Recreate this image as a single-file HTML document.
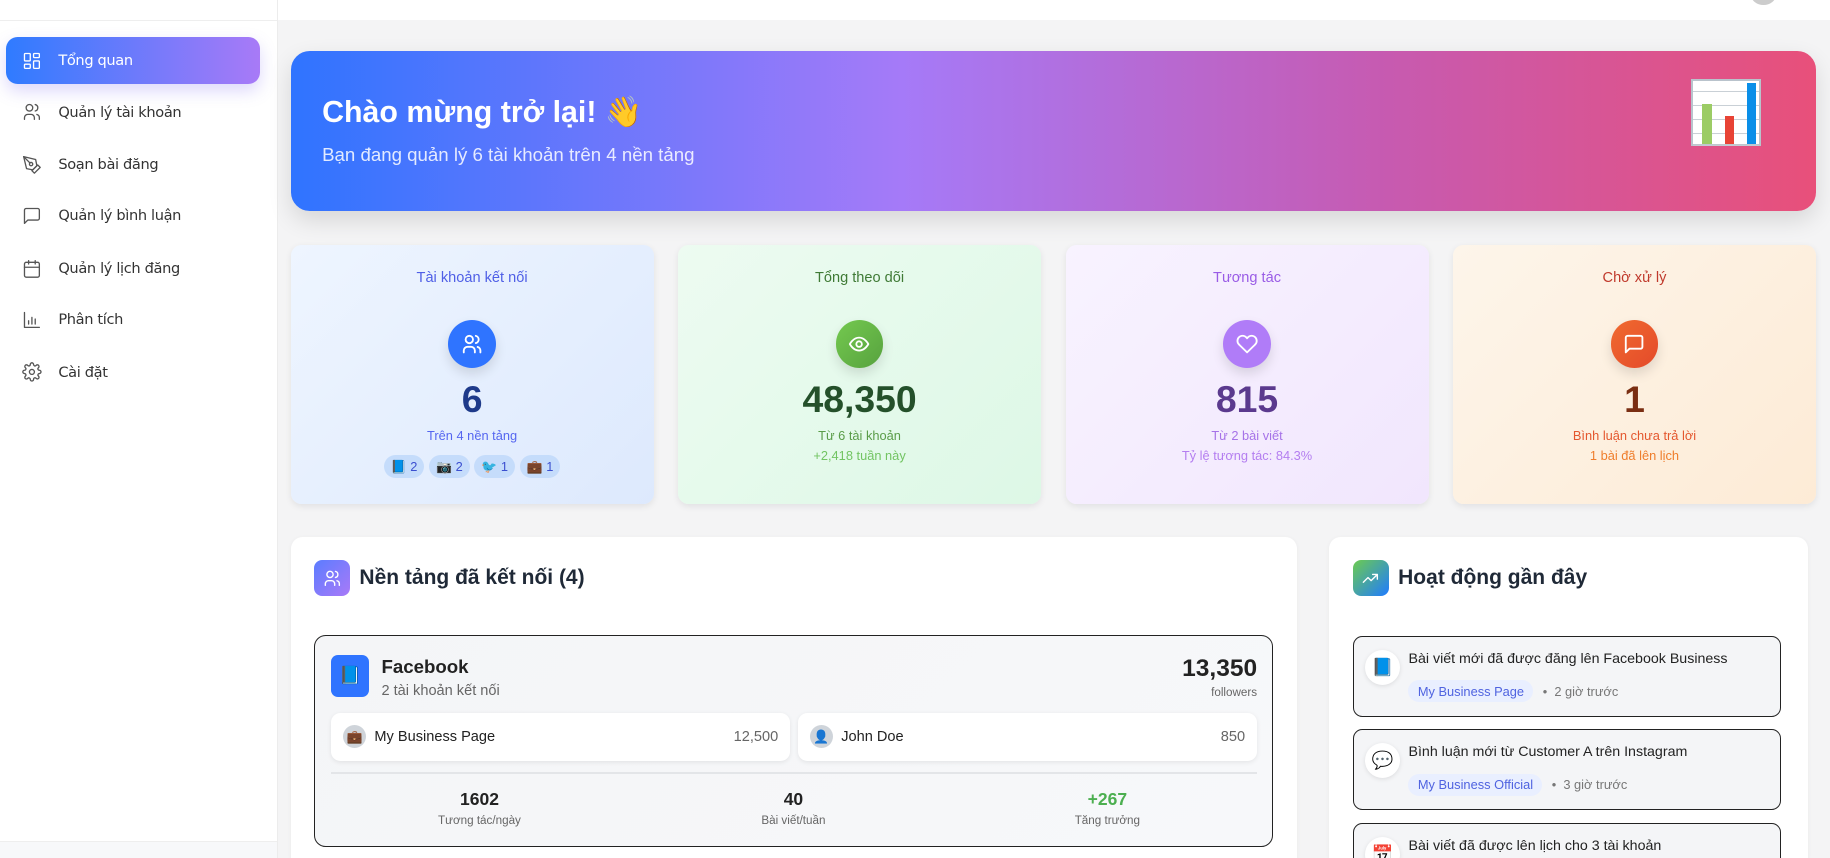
<!DOCTYPE html>
<html><head><meta charset="utf-8">
<style>
html{zoom:1.16709;overflow:hidden;background:#f4f4f5;height:735px}
*{box-sizing:border-box;margin:0;padding:0}
body{width:1568px;height:735px;overflow:hidden;background:#f4f4f5;font-family:"Liberation Sans","Noto Sans CJK SC",sans-serif;position:relative;color:#222}
.abs{position:absolute}
.side{left:0;top:0;width:238px;height:735px;background:#fff;border-right:1px solid #ececec;overflow:hidden}
.side .hd{position:absolute;left:0;top:0;width:237px;height:18px;border-bottom:1px solid #eee}
.nav{position:absolute;left:5px;width:218px;height:40px;border-radius:10px;display:flex;align-items:center;padding-left:14px;font-family:"DejaVu Sans","Liberation Sans",sans-serif;font-size:12.5px;color:#333;letter-spacing:-0.3px}
.nav svg{width:17px;height:17px;margin-right:14px;fill:none;stroke:#555;stroke-width:1.6;stroke-linecap:round;stroke-linejoin:round}
.nav.on{background:linear-gradient(90deg,#2f7bff,#a87af7);color:#fff;box-shadow:0 6px 14px rgba(120,100,240,.25)}
.nav.on svg{stroke:#fff}
.topbar{left:238px;top:0;width:1330px;height:17px;background:#fff;overflow:hidden}
.banner{left:249px;top:44px;width:1307px;height:137px;border-radius:16px;background:linear-gradient(90deg,#2f74ff 0%,#a57af8 40%,#c75ab0 72%,#e8507a 100%);box-shadow:0 8px 20px rgba(0,0,0,.12);color:#fff}
.banner h1{position:absolute;left:27px;top:37px;font-size:26px;font-weight:bold}
.banner p{position:absolute;left:27px;top:79px;font-size:16px;color:rgba(255,255,255,.85)}
.card{top:210px;width:311px;height:222px;border-radius:9px;box-shadow:0 2px 6px rgba(0,0,0,.08);text-align:center}
.card .t{position:absolute;top:21px;width:100%;font-size:12.5px}
.card .ic{position:absolute;left:135px;top:64px;width:41px;height:41px;border-radius:50%;display:flex;align-items:center;justify-content:center;box-shadow:0 5px 10px rgba(0,0,0,.12)}
.card .ic svg{width:19px;height:19px;fill:none;stroke:#fff;stroke-width:2;stroke-linecap:round;stroke-linejoin:round}
.card .n{position:absolute;top:114px;width:100%;font-size:32px;font-weight:bold}
.card .s{position:absolute;top:157px;width:100%;font-size:11px}
.card .s2{position:absolute;top:174px;width:100%;font-size:11px}
.badges{position:absolute;top:180px;width:100%;display:flex;justify-content:center;gap:4px}
.badges span{background:#c5dcfb;border-radius:10px;height:20px;padding:0 6px;font-size:11px;line-height:20px;color:#3b4fd0}
.panel{background:#fff;border-radius:10px 10px 0 0;box-shadow:0 1px 4px rgba(0,0,0,.05);overflow:hidden}
.ph{position:absolute;left:20px;top:20px;display:flex;align-items:center}
.ph .pi{width:31px;height:31px;border-radius:7px;display:flex;align-items:center;justify-content:center;margin-right:8px}
.ph .pi svg{width:16px;height:16px;fill:none;stroke:#fff;stroke-width:1.8;stroke-linecap:round;stroke-linejoin:round}
.ph b{font-size:18px;color:#1f2937}
.fb{left:20px;top:84px;width:822px;height:182px;border:1px solid #222;border-radius:10px;background:linear-gradient(135deg,#f4f5f7,#f7f8fa)}
.acc{position:absolute;top:66px;height:41px;background:#fff;border-radius:8px;box-shadow:0 1px 4px rgba(0,0,0,.08);display:flex;align-items:center;padding:0 10px;font-size:12.5px}
.acc .av{width:20px;height:20px;border-radius:50%;background:#cfd4da;margin-right:7px;font-size:11px;display:flex;align-items:center;justify-content:center}
.acc .r{margin-left:auto;color:#666}
.st{position:absolute;top:131px;width:200px;text-align:center}
.st b{display:block;font-size:15px;color:#222}
.st span{display:block;font-size:10px;color:#666;margin-top:4px}
.actv{position:absolute;left:20px;width:367px;height:69px;border:1px solid #222;border-radius:8px;background:#f4f5f7}
.actv .ai{position:absolute;left:10px;top:11px;width:30px;height:30px;border-radius:50%;background:#fff;box-shadow:0 1px 4px rgba(0,0,0,.1);display:flex;align-items:center;justify-content:center;font-size:15px}
.actv .at{position:absolute;left:47px;top:12px;font-size:12.2px;color:#222}
.actv .am{position:absolute;left:47px;top:37px;display:flex;align-items:center;font-size:11px;color:#777}
.actv .tag{background:#e9efff;color:#4f63e0;border-radius:10px;padding:3px 8px;margin-right:8px}
</style></head><body>
<div class="abs side">
 <div class="hd"></div>
 <div class="nav on" style="top:32px"><svg viewBox="0 0 24 24"><rect x="3" y="3" width="7" height="9" rx="1"/><rect x="14" y="3" width="7" height="5" rx="1"/><rect x="14" y="12" width="7" height="9" rx="1"/><rect x="3" y="16" width="7" height="5" rx="1"/></svg>Tổng quan</div>
 <div class="nav" style="top:76px"><svg viewBox="0 0 24 24"><circle cx="9" cy="7" r="4"/><path d="M3 21v-2a4 4 0 0 1 4-4h4a4 4 0 0 1 4 4v2M16 3.1a4 4 0 0 1 0 7.8M21 21v-2a4 4 0 0 0-3-3.9"/></svg>Quản lý tài khoản</div>
 <div class="nav" style="top:121px"><svg viewBox="0 0 24 24"><path d="M12 19l7-7 3 3-7 7z"/><path d="M18 13l-1.5-7.5L2 2l3.5 14.5L13 18z"/><path d="M2 2l7.6 7.6"/><circle cx="11" cy="11" r="2"/></svg>Soạn bài đăng</div>
 <div class="nav" style="top:165px"><svg viewBox="0 0 24 24"><path d="M21 15a2 2 0 0 1-2 2H7l-4 4V5a2 2 0 0 1 2-2h14a2 2 0 0 1 2 2z"/></svg>Quản lý bình luận</div>
 <div class="nav" style="top:210px"><svg viewBox="0 0 24 24"><rect x="3" y="4" width="18" height="18" rx="2"/><path d="M16 2v4M8 2v4M3 10h18"/></svg>Quản lý lịch đăng</div>
 <div class="nav" style="top:254px"><svg viewBox="0 0 24 24"><path d="M3 3v18h18M8 17v-4M12 17V9M16 17v-6"/></svg>Phân tích</div>
 <div class="nav" style="top:299px"><svg viewBox="0 0 24 24"><circle cx="12" cy="12" r="3"/><path d="M19.4 15a1.7 1.7 0 0 0 .3 1.8l.1.1a2 2 0 1 1-2.8 2.8l-.1-.1a1.7 1.7 0 0 0-2.9 1.2V21a2 2 0 1 1-4 0v-.1a1.7 1.7 0 0 0-2.9-1.2l-.1.1a2 2 0 1 1-2.8-2.8l.1-.1a1.7 1.7 0 0 0-1.2-2.9H3a2 2 0 1 1 0-4h.1a1.7 1.7 0 0 0 1.2-2.9l-.1-.1a2 2 0 1 1 2.8-2.8l.1.1a1.7 1.7 0 0 0 2.9-1.2V3a2 2 0 1 1 4 0v.1a1.7 1.7 0 0 0 2.9 1.2l.1-.1a2 2 0 1 1 2.8 2.8l-.1.1a1.7 1.7 0 0 0 1.2 2.9H21a2 2 0 1 1 0 4h-.1a1.7 1.7 0 0 0-1.5 1z"/></svg>Cài đặt</div>
 <div style="position:absolute;left:0;top:721px;width:237px;height:14px;background:#f7f8fa;border-top:1px solid #eee"></div>
</div>
<div class="abs topbar"><div style="position:absolute;left:1262px;top:-14px;width:22px;height:18px;border-radius:50%;background:#ccc"></div></div>

<div class="abs banner"><h1>Chào mừng trở lại! 👋</h1><p>Bạn đang quản lý 6 tài khoản trên 4 nền tảng</p>
<div style="position:absolute;left:1200px;top:24px;width:60px;height:57px;background:#fff;border:2px solid #b9c3cc">
 <div style="position:absolute;left:0;right:0;top:8px;height:1px;background:#c9d0d6;box-shadow:0 12px 0 #c9d0d6,0 24px 0 #c9d0d6,0 36px 0 #c9d0d6,0 46px 0 #c9d0d6"></div>
 <div style="position:absolute;left:8px;bottom:0;width:8px;height:34px;background:#9ccc65"></div>
 <div style="position:absolute;left:27px;bottom:0;width:8px;height:24px;background:#e84335"></div>
 <div style="position:absolute;left:46px;bottom:0;width:8px;height:52px;background:#0a8fe8"></div>
</div></div>

<div class="abs card" style="left:249px;background:linear-gradient(135deg,#eef5ff,#dde9fd)">
 <div class="t" style="color:#4f5fe6">Tài khoản kết nối</div>
 <div class="ic" style="background:#2f74ff"><svg viewBox="0 0 24 24"><circle cx="9" cy="7" r="4"/><path d="M3 21v-2a4 4 0 0 1 4-4h4a4 4 0 0 1 4 4v2M16 3.1a4 4 0 0 1 0 7.8M21 21v-2a4 4 0 0 0-3-3.9"/></svg></div>
 <div class="n" style="color:#1e3a8a">6</div>
 <div class="s" style="color:#5566f0">Trên 4 nền tảng</div>
 <div class="badges"><span>📘 2</span><span>📷 2</span><span>🐦 1</span><span>💼 1</span></div>
</div>
<div class="abs card" style="left:581px;background:linear-gradient(135deg,#edfbf1,#ddf8e6)">
 <div class="t" style="color:#3f7a35">Tổng theo dõi</div>
 <div class="ic" style="background:linear-gradient(135deg,#74c94f,#57a23f)"><svg viewBox="0 0 24 24"><path d="M2 12s3.5-7 10-7 10 7 10 7-3.5 7-10 7S2 12 2 12z"/><circle cx="12" cy="12" r="3"/></svg></div>
 <div class="n" style="color:#24502a">48,350</div>
 <div class="s" style="color:#5a9c48">Từ 6 tài khoản</div>
 <div class="s2" style="color:#72c462">+2,418 tuần này</div>
</div>
<div class="abs card" style="left:913px;background:linear-gradient(135deg,#f8f3ff,#f1e6fd)">
 <div class="t" style="color:#9a5ce6">Tương tác</div>
 <div class="ic" style="background:#b07cf8"><svg viewBox="0 0 24 24"><path d="M20.8 4.6a5.5 5.5 0 0 0-7.8 0L12 5.7l-1-1.1a5.5 5.5 0 0 0-7.8 7.8l1 1L12 21l7.8-7.6 1-1a5.5 5.5 0 0 0 0-7.8z"/></svg></div>
 <div class="n" style="color:#5b3a8e">815</div>
 <div class="s" style="color:#a672e8">Từ 2 bài viết</div>
 <div class="s2" style="color:#b47ef0">Tỷ lệ tương tác: 84.3%</div>
</div>
<div class="abs card" style="left:1245px;background:linear-gradient(135deg,#fdf5ea,#fdebd6)">
 <div class="t" style="color:#c0392b">Chờ xử lý</div>
 <div class="ic" style="background:linear-gradient(135deg,#f06a30,#e44a2a)"><svg viewBox="0 0 24 24"><path d="M21 15a2 2 0 0 1-2 2H7l-4 4V5a2 2 0 0 1 2-2h14a2 2 0 0 1 2 2z"/></svg></div>
 <div class="n" style="color:#7a2e12">1</div>
 <div class="s" style="color:#e4572e">Bình luận chưa trả lời</div>
 <div class="s2" style="color:#ef7d2b">1 bài đã lên lịch</div>
</div>

<div class="abs panel" style="left:249px;top:460px;width:862px;height:275px">
 <div class="ph"><div class="pi" style="background:linear-gradient(135deg,#5b7cff,#a97af8)"><svg viewBox="0 0 24 24"><circle cx="9" cy="7" r="4"/><path d="M3 21v-2a4 4 0 0 1 4-4h4a4 4 0 0 1 4 4v2M16 3.1a4 4 0 0 1 0 7.8M21 21v-2a4 4 0 0 0-3-3.9"/></svg></div><b>Nền tảng đã kết nối (4)</b></div>
 <div class="abs fb">
  <div style="position:absolute;left:14px;top:16px;width:32px;height:36px;border-radius:6px;background:#2f74ff;display:flex;align-items:center;justify-content:center;font-size:15px">📘</div>
  <div style="position:absolute;left:57px;top:17px;font-size:16px;font-weight:bold;color:#222">Facebook</div>
  <div style="position:absolute;left:57px;top:40px;font-size:12.5px;color:#666">2 tài khoản kết nối</div>
  <div style="position:absolute;right:13px;top:16px;font-size:21px;font-weight:bold;color:#222">13,350</div>
  <div style="position:absolute;right:13px;top:43px;font-size:10px;color:#666">followers</div>
  <div class="acc" style="left:14px;width:393px"><div class="av">💼</div>My Business Page<span class="r">12,500</span></div>
  <div class="acc" style="left:414px;width:393px"><div class="av">👤</div>John Doe<span class="r">850</span></div>
  <div style="position:absolute;left:14px;right:13px;top:117px;height:1px;background:#e3e5e8"></div>
  <div class="st" style="left:41px"><b>1602</b><span>Tương tác/ngày</span></div>
  <div class="st" style="left:310px"><b>40</b><span>Bài viết/tuần</span></div>
  <div class="st" style="left:579px"><b style="color:#4caf50">+267</b><span>Tăng trưởng</span></div>
 </div>
</div>

<div class="abs panel" style="left:1139px;top:460px;width:410px;height:275px">
 <div class="ph"><div class="pi" style="background:linear-gradient(135deg,#6ccb4f,#1f7bff)"><svg viewBox="0 0 24 24"><path d="M3 17l6-6 4 4 8-8M15 7h6v6"/></svg></div><b>Hoạt động gần đây</b></div>
 <div class="actv" style="top:85px"><div class="ai">📘</div><div class="at">Bài viết mới đã được đăng lên Facebook Business</div><div class="am"><span class="tag">My Business Page</span>•&nbsp;&nbsp;2 giờ trước</div></div>
 <div class="actv" style="top:165px"><div class="ai">💬</div><div class="at">Bình luận mới từ Customer A trên Instagram</div><div class="am"><span class="tag">My Business Official</span>•&nbsp;&nbsp;3 giờ trước</div></div>
 <div class="actv" style="top:245px"><div class="ai">📅</div><div class="at">Bài viết đã được lên lịch cho 3 tài khoản</div></div>
</div>
</body></html>
